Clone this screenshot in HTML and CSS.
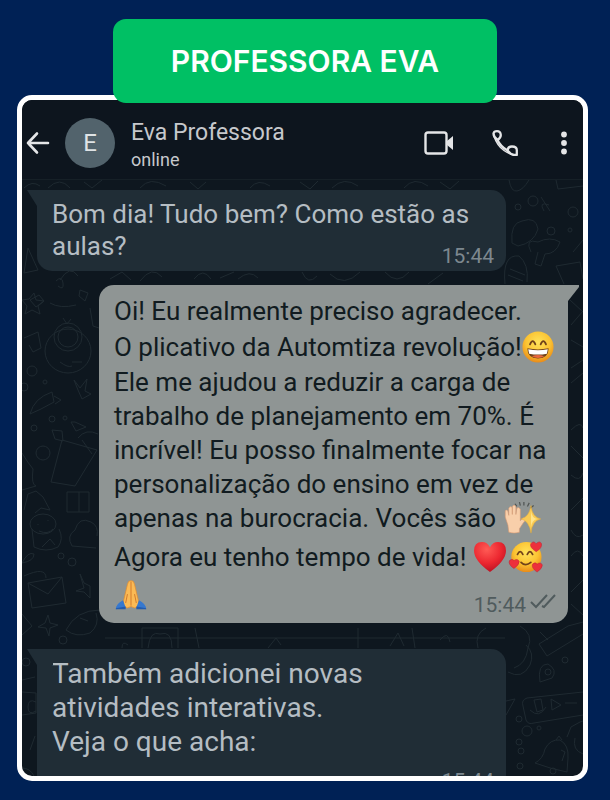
FILE: index.html
```html
<!DOCTYPE html>
<html lang="pt-BR">

<head>
    <meta charset="UTF-8">
    <meta name="viewport" content="width=device-width, initial-scale=1.0">
    <title>Professora Eva</title>
    <link rel="stylesheet" href="styles.css">
</head>

<body>
    <h1 class="badge">PROFESSORA EVA</h1>

    <main class="phone">
        <!-- wallpaper -->
        <svg class="doodles" viewBox="22 100 561 676" preserveAspectRatio="xMidYMin slice" aria-hidden="true">
            <path d="M22 179H583M105 638H505" />
            <path d="M24 188q8-8 16-2M48 188q12-12 22 0M84 182l8 6 10-8M140 188q10-12 26-2M190 182l8 7 8-7M250 188q8-10 20-2M300 182l10 7 8-8M332 188q12-12 26-2M404 188q10-12 24-2M440 182l10 7 9-8M509 180q2 12 8 11t12-11M556 180l2 9 25-3" />
            <path d="M28 248l10 22-14 3zM30 300l9-5 5 6-8 6zM34 293l2 7 8 1-6 5 2 8-8-4-7 4 2-8-5-6 7-1zM56 281q6-6 7 2t-5 3M80 290l8 3-3 8-6-5zM50 303q10 6 26 2M63 318l4 6 4-5" />
            <ellipse cx="68" cy="351" rx="23" ry="22" />
            <circle cx="68" cy="337" r="14" />
            <circle cx="68" cy="337" r="10" />
            <path d="M60 362q8 6 12 4M72 362h10M24 338l14-6 3 16-8 4-4-7M90 308l3 18 6 2" />
            <circle cx="32" cy="371" r="5" />
            <circle cx="45" cy="382" r="2" />
            <circle cx="24" cy="387" r="4" />
            <path d="M74 380l6 8 7-9-2 12 6 3-9 5-4-9zM30 414q4-16 22-22l2 10q-14 8-24 12zM54 396l7 4-6 4M71 422l5 9 10-4-11-5z" />
            <circle cx="52" cy="419" r="3" />
            <circle cx="34" cy="428" r="3" />
            <circle cx="65" cy="418" r="2" />
            <circle cx="43" cy="453" r="7" />
            <path d="M62 440l35 10-22 36-24-4zM52 430l10 1 1 10-8-2zM78 438q8-10 20-4M82 440l10 14M22 453q6 10 11 16-2 16 3 17l-14 4" />
            <path d="M24 510l4-16 8-3 7 6 7 13-9-2-6 5M67 492h22v20H67zM79 492v20" />
            <ellipse cx="43" cy="524" rx="13" ry="10" />
            <path d="M32 529l2 18q12 6 24 0 6-8 1-18M38 524v1M48 520v1M39 531q9 4 14-2M42 547l8-8 5 6" />
            <path d="M72 546q-6-10 3-16 4-14 16-8 8 4 6 14M72 546l24 2" />
            <circle cx="61" cy="556" r="3" />
            <circle cx="72" cy="562" r="4" />
            <path d="M22 563q6-12 12-9 0 7-12 9M28 583l34-6 4 26-34 5zM28 583l20 11 14-17M24 576q22-10 22 2M80 574l4 14-8 3 8 1 6 6 0-12-6-3z" />
            <path d="M48 615l2 8 8 2-8 3-1 8-3-8-8-1 7-4zM22 614l10 12-10 9M66 630q10-20 34-20M66 630q10 8 24 3 10-8 6-20M80 618l8 3" />
            <circle cx="63" cy="640" r="4" />
            <circle cx="26" cy="662" r="4" />
            <path d="M22 680l13-3M22 692l14 1v20l-14 2M36 702q-8-4-8 5t8 4M30 750l5-14M22 768q8 0 12 8M142 648v-20h36v20M148 648q2-18 12-14 12-4 12 14M195 628l4 20M122 648q0-8 6-3M268 648l8-10 5 7M358 628v20M390 646l8-13 6 13M412 628l3 20M440 640q8-10 10 2M478 648q-4-14 8-20" />
            <path d="M60 280q10-16 18-4M110 279l12-7 9 8M140 281q12-16 22-4M194 279q9-12 17 0M220 278l14-6M238 279q12-10 20-1M302 272q6 14 15 4M330 274q14 14 30-2M385 272q12 14 24 0M428 284l15-11" />
            <circle cx="533" cy="201" r="5" />
            <circle cx="518" cy="207" r="3" />
            <path d="M544 211q-6-10 5-6M541 197l9 14M512 243q-2-20 10-22 14-5 16 8-4 14-20 17zM531 252q-7-14 7-10 12-6 22 0-4 12-15 12l-4 12-6-2 3-12M505 284q-3-30 14-28 10 8 8 26M510 269l15 6M508 275l15 6M556 266l24-4 3 17M556 266l8 18M573 252l10-12" />
            <circle cx="573" cy="212" r="5" />
            <circle cx="551" cy="231" r="4" />
            <circle cx="570" cy="230" r="2" />
            <path d="M570 300l13 12M571 325l12-14M571 340l12 7M571 368l12-8M571 383l12-10M571 430q10-10 12-2M571 446l12 12M571 475q9 8 12-2M571 510l12-12M571 530q5 10 12 5M571 556q7-10 12 0M571 592l12-12M571 604l12 11" />
            <path d="M539 644l29-18 15-4M539 644l8 12 36-22M540 632l8 8M520 626q14 8 8 22-2 16-14 20M508 672q14 8 22-7 5-12-4-20M540 682q-3-18 8-18 10 6 4 14z" />
            <circle cx="548" cy="672" r="3" />
            <circle cx="565" cy="660" r="3" />
            <path d="M583 692l-56 6q-6 2-4 8l3 14q2 5 8 3l49-8M534 700l7-1 2 11-6 2zM530 710q9 9 16-3M551 699l10 6-9 5zM565 703h12M506 715l9-16-9 2" />
            <circle cx="519" cy="719" r="3" />
            <circle cx="527" cy="731" r="5" />
            <circle cx="539" cy="728" r="2" />
            <circle cx="519" cy="742" r="3" />
            <circle cx="521" cy="751" r="3" />
            <circle cx="520" cy="766" r="3" />
            <path d="M535 763q8-4 10-14 5-10 15-9 9 5 8 18l-1 14q-16-3-32-9zM556 740l3-4 3 4M561 750l4 2-3 9M567 737l4-10 9-5 3-1M575 738q-3 12 8 16" />
            <circle cx="553" cy="771" r="3" />
        </svg>

        <header class="topbar">
            <button class="icon-btn" type="button" aria-label="Voltar">
                <svg width="24" height="24" viewBox="0 0 24 24">
                    <path d="M11 2.500L2 12l9 9.500M2 12h20" stroke-width="2.600" />
                </svg>
            </button>
            <div class="avatar">E</div>
            <div class="contact">
                <h2>Eva Professora</h2>
                <p>online</p>
            </div>
            <div class="actions">
                <button class="icon-btn" type="button" aria-label="Chamada de vídeo">
                    <svg width="30" height="24" viewBox="0 0 30 24">
                        <rect x="1.500" y="1.500" width="21" height="21" rx="2.500" stroke-width="2.400" />
                        <path d="M23 10l6-5v14l-6-5z" fill="#e4e5e7" stroke="none" />
                    </svg>
                </button>
                <button class="icon-btn" type="button" aria-label="Ligar">
                    <svg width="26" height="26" viewBox="0 0 26 26" stroke-width="2.300">
                        <path d="M5.500 10Q1.500 7 1.500 3.500Q2 1.200 5 1.200Q8.500 1.200 8.800 5Q8.800 8 5.500 10Q8.500 16.500 15.500 20.500" />
                        <path d="M15.500 20.500Q16 16.500 20 16.500Q25 16.500 24.800 20.500V25H22Q18.500 24.500 15.500 20.500" />
                        <path d="M2 6Q5 15.500 12 20.500Q17 24 22 25" stroke-width="1.500" />
                    </svg>
                </button>
                <button class="icon-btn" type="button" aria-label="Mais opções">
                    <svg width="8" height="24" viewBox="0 0 8 24">
                        <g fill="#e4e5e7" stroke="none">
                            <circle cx="4" cy="3.500" r="2.900" />
                            <circle cx="4" cy="12" r="2.900" />
                            <circle cx="4" cy="20.500" r="2.900" />
                        </g>
                    </svg>
                </button>
            </div>
        </header>

        <section class="chat">
            <article class="bubble received first">
                <p>Bom dia! Tudo bem? Como estão as aulas?<time>15:44</time></p>
            </article>

            <article class="bubble sent">
                <p class="intro">Oi! Eu realmente preciso agradecer.<br>O plicativo da Automtiza revolução!<svg class="emoji" viewBox="0 0 36 36" role="img" aria-label="sorriso">
                        <defs>
                            <radialGradient id="face" cx=".5" cy=".35" r=".65">
                                <stop offset="0" stop-color="#ffe35a" />
                                <stop offset=".6" stop-color="#fbc332" />
                                <stop offset="1" stop-color="#e98b19" />
                            </radialGradient>
                        </defs>
                        <circle cx="18" cy="18" r="17.500" fill="url(#face)" />
                        <path d="M9 15q3-7 6 0M21 15q3-7 6 0" fill="none" stroke="#70421a" stroke-width="2" stroke-linecap="round" />
                        <path d="M6 19.500q12 2.500 24 0 0 11-12 11.500-12-.5-12-11.500z" fill="#70421a" />
                        <path d="M7 20.500q11 2.300 22 0l-1 5q-10 2-20 0z" fill="#fff" />
                        <path d="M11 28.500q7-3 14 0-7 4-14 0z" fill="#e8683e" />
                    </svg></p>
                <p class="body">Ele me ajudou a reduzir a carga de trabalho de planejamento em 70%. É incrível! Eu posso finalmente focar na personalização do ensino em vez de apenas na burocracia. Vocês são <svg class="emoji hand" viewBox="0 0 42 36" role="img" aria-label="mão e brilhos">
                        <path d="M14 5l-2-3M18 4l-1-4M22 4V0M26 5l2-4M29 7l4-3" stroke="#505553" stroke-width="1.400" />
                        <path d="M5 34l-1-8-3-9 0-7q1-2 3 0l1 5V7q1-3 4-1l0 8V5q2-3 4 0l0 9 1-7q2-2 4 1l0 13q4-5 6-3 1 2-3 6l-4 6v4q-6 2-12 0z" fill="#f8cfaa" stroke="#d39a74" stroke-width=".7" />
                        <path d="M30 4q1 13 11 15-10 2-11 16-2-14-11-16 9-2 11-15z" fill="#f9cb55" stroke="#e8ae39" stroke-width=".6" />
                        <path d="M30 10q1 8 7 9-6 1-7 9z" fill="#ffe58d" />
                    </svg></p>
                <p class="outro">Agora eu tenho tempo de vida! <svg class="emoji heart" viewBox="0 0 36 36" role="img" aria-label="coração">
                        <defs>
                            <radialGradient id="red" cx=".4" cy=".25" r=".75">
                                <stop offset="0" stop-color="#ff5b55" />
                                <stop offset=".6" stop-color="#ec2730" />
                                <stop offset="1" stop-color="#bc1223" />
                            </radialGradient>
                        </defs>
                        <path d="M18 35Q0 22 0 11 0 1 9 1q6 0 9 6 3-6 9-6 9 0 9 10 0 11-18 24z" fill="url(#red)" />
                    </svg><svg class="emoji love" viewBox="0 0 38 36" role="img" aria-label="rosto apaixonado">
                        <circle cx="20" cy="18" r="17" fill="url(#face)" />
                        <path d="M10 15q3-6 6 0M21 15q3-6 6 0M14 24q5 5 11 0" fill="none" stroke="#70421a" stroke-width="2" stroke-linecap="round" />
                        <g fill="#ed303b" stroke="#b91e31" stroke-width=".5">
                            <path d="M31 12q-8-5-6-9 3-4 6 0 4-4 6 0 1 5-6 9z" />
                            <path d="M6 31q-7-5-5-9 3-3 5 0 4-3 6 1 0 4-6 8z" />
                            <path d="M32 35q-7-5-5-9 3-3 5 0 4-3 6 1 0 4-6 8z" />
                        </g>
                    </svg></p>
                <div class="last-line">
                    <svg class="emoji pray" viewBox="0 0 36 36" role="img" aria-label="mãos juntas">
                        <path d="M18 2q-3-1-4 4l-4 17-1 8q5 3 9 0 4 3 9 0l-1-8-4-17q-1-5-4-4z" fill="#fbba55" stroke="#e08b2e" stroke-width=".8" />
                        <path d="M18 3v27M14 17l-2 10M22 17l2 10" fill="none" stroke="#ce7427" stroke-width="1" />
                        <path d="M9 24l3 8-11 2q0-6 8-10zM27 24l-3 8 11 2q0-6-8-10z" fill="#3678cf" />
                        <path d="M1 33l11-2v3H1zM35 33l-11-2v3h11z" fill="#235bad" />
                    </svg>
                    <time>15:44</time>
                    <svg class="ticks" width="26" height="16" viewBox="0 0 26 16" role="img" aria-label="entregue">
                        <path d="M1 9l5 5L17 2M12 13l2 1L25 2" />
                    </svg>
                </div>
            </article>

            <article class="bubble received large">
                <p>Também adicionei novas<br>atividades interativas.<br>Veja o que acha:</p>
                <time>15:44</time>
            </article>
        </section>
    </main>
</body>

</html>
```

FILE: styles.css
```css
* {
    box-sizing: border-box;
    margin: 0;
    padding: 0;
}

body {
    height: 100vh;
    padding: 19px 0;
    display: flex;
    flex-direction: column;
    background: #002155;
    font-family: Roboto, sans-serif;
}

.badge {
    position: relative;
    z-index: 1;
    flex: none;
    width: 63%;
    margin: 0 auto -8px;
    border-radius: 13px;
    background: #00c064;
    color: #fff;
    font-family: Inter, sans-serif;
    font-size: 30px;
    font-weight: 600;
    line-height: 84px;
    text-align: center;
}

.phone {
    position: relative;
    flex: 1;
    min-height: 0;
    margin: 0 22px 0 17px;
    overflow: hidden;
    border: 5px solid #fff;
    border-radius: 15px;
    background: #0e171f;
}

.doodles {
    position: absolute;
    top: 0;
    left: 0;
    width: 100%;
    height: 100%;
    fill: none;
    stroke: #1f2a31;
    stroke-width: 1;
}

/* header */
.topbar {
    position: relative;
    height: 79px;
    padding: 7px 15px 0 4px;
    display: flex;
    align-items: center;
    background: #0d151e;
}

.icon-btn {
    display: flex;
    border: 0;
    background: none;
}

.icon-btn svg {
    fill: none;
    stroke: #e4e5e7;
    stroke-linecap: round;
    stroke-linejoin: round;
}

.avatar {
    width: 50px;
    height: 50px;
    margin: 0 16px 0 15px;
    border-radius: 50%;
    background: #52636c;
    color: #dfe3e5;
    font-size: 24px;
    line-height: 50px;
    text-align: center;
}

.contact {
    padding-top: 4px;
    color: #c6c8cc;
}

.contact h2 {
    font-size: 23px;
    font-weight: 400;
    line-height: 30px;
}

.contact p {
    font-size: 18px;
    line-height: 24px;
}

.actions {
    margin-left: auto;
    display: flex;
    align-items: center;
    gap: 38px;
}

.actions .icon-btn:last-child {
    padding-left: 4px;
}

/* messages */
.chat {
    position: relative;
    padding: 11px 15px;
    display: flex;
    flex-direction: column;
}

.bubble {
    position: relative;
    width: calc(100% - 62px);
    padding: 8px 12px 8px 15px;
    display: flex;
    flex-direction: column;
    border-radius: 15px;
    font-size: 26px;
    line-height: 34px;
}

.bubble::before {
    content: "";
    position: absolute;
    top: 0;
    width: 26px;
    height: 16px;
}

.bubble time {
    align-self: flex-end;
    margin-top: 12px;
    font-size: 21px;
    line-height: 20px;
}

.received {
    border-top-left-radius: 0;
    background: #202d36;
    color: #b5bdc3;
}

.received::before {
    left: -10px;
    background: #202d36;
    clip-path: polygon(0 0, 100% 0, 100% 100%, 10px 100%);
}

.received time {
    color: #7d888f;
}

.first {
    padding-bottom: 5px;
    line-height: 32px;
}

.first time {
    float: right;
    margin-top: 16px;
}

.large {
    font-size: 28px;
}

.sent {
    align-self: flex-end;
    margin: 14px 0 26px;
    border-top-right-radius: 0;
    background: #8f9594;
    color: #111b20;
}

.sent::before {
    right: -11px;
    background: #8f9594;
    clip-path: polygon(0 0, 100% 0, 100% 2px, 15px 100%, 0 100%);
}

.intro,
.outro {
    line-height: 36px;
}

.outro {
    margin-top: 4px;
}

.emoji {
    width: 32px;
    height: 32px;
    vertical-align: -7px;
}

.hand {
    width: 40px;
}

.heart {
    width: 34px;
}

.love {
    width: 37px;
}

.last-line {
    height: 40px;
    display: flex;
    align-items: center;
}

.sent .last-line time {
    margin-top: 14px;
    margin-left: auto;
    color: #505b5d;
}

.pray {
    width: 34px;
}

.ticks {
    margin: 12px 0 0 4px;
    fill: none;
    stroke: #505b5d;
    stroke-width: 2;
}
```
